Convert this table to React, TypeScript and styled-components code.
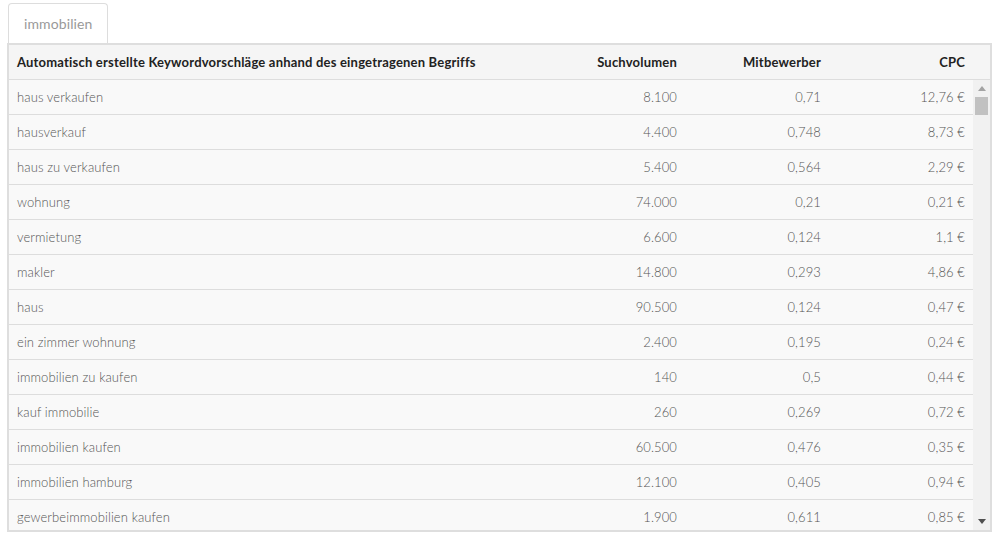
import React from "react";
import styled, { createGlobalStyle } from "styled-components";

const Global = createGlobalStyle`
  html, body { margin: 0; padding: 0; background: #fff; }
  body { font-family: Lato, "Open Sans", sans-serif; }
`;

const Page = styled.div`
  padding: 3px 0 0 7px;
  width: 985px;
`;

const Tabs = styled.div`
  display: flex;
  padding-left: 1px;
`;

const Tab = styled.div`
  height: 40px;
  box-sizing: border-box;
  padding: 0 15px;
  display: flex;
  align-items: center;
  border: 1px solid #dddddd;
  border-bottom: none;
  border-radius: 4px 4px 0 0;
  color: #999;
  font-size: 14px;
  font-weight: 400;
  letter-spacing: 0.1px;
  background: #fff;
`;

const Panel = styled.div`
  border: 2px solid #dedede;
  background: #f5f5f5;
`;

const Row = styled.div<{ $head?: boolean }>`
  display: grid;
  grid-template-columns: 1fr 144px 144px 144px;
  flex: none;
  height: 35px;
  box-sizing: border-box;
  border-bottom: 1px solid #dddddd;
  background: ${(p) => (p.$head ? "#f5f5f5" : "#f9f9f9")};
  color: ${(p) => (p.$head ? "#222" : "#555")};
  font-size: 13px;
  font-weight: ${(p) => (p.$head ? 700 : 300)};
  letter-spacing: ${(p) => (p.$head ? "0.2px" : "0.1px")};
  padding-right: ${(p) => (p.$head ? "17px" : "0")};
`;

const Cell = styled.div<{ $right?: boolean }>`
  display: flex;
  align-items: center;
  justify-content: ${(p) => (p.$right ? "flex-end" : "flex-start")};
  padding: 0 8px;
  white-space: nowrap;
`;

const Body = styled.div`
  display: flex;
  height: 450px;
  overflow: hidden;
`;

const Rows = styled.div`
  flex: 1;
  display: flex;
  flex-direction: column;
`;

const ScrollBar = styled.div`
  width: 17px;
  flex: none;
  background: #f1f1f1;
  display: flex;
  flex-direction: column;
  align-items: center;
`;

const Arrow = styled.div`
  height: 17px;
  width: 17px;
  display: flex;
  align-items: center;
  justify-content: center;
  svg { display: block; }
`;

const Track = styled.div`
  flex: 1;
  width: 100%;
  display: flex;
  flex-direction: column;
  align-items: center;
`;

const Thumb = styled.div`
  width: 13px;
  height: 18px;
  background: #c1c1c1;
`;

type Item = [string, string, string, string];

const data: Item[] = [
  ["haus verkaufen", "8.100", "0,71", "12,76 €"],
  ["hausverkauf", "4.400", "0,748", "8,73 €"],
  ["haus zu verkaufen", "5.400", "0,564", "2,29 €"],
  ["wohnung", "74.000", "0,21", "0,21 €"],
  ["vermietung", "6.600", "0,124", "1,1 €"],
  ["makler", "14.800", "0,293", "4,86 €"],
  ["haus", "90.500", "0,124", "0,47 €"],
  ["ein zimmer wohnung", "2.400", "0,195", "0,24 €"],
  ["immobilien zu kaufen", "140", "0,5", "0,44 €"],
  ["kauf immobilie", "260", "0,269", "0,72 €"],
  ["immobilien kaufen", "60.500", "0,476", "0,35 €"],
  ["immobilien hamburg", "12.100", "0,405", "0,94 €"],
  ["gewerbeimmobilien kaufen", "1.900", "0,611", "0,85 €"],
];

export default function App() {
  return (
    <>
      <Global />
      <Page>
        <Tabs>
          <Tab>immobilien</Tab>
        </Tabs>
        <Panel>
          <Row $head>
            <Cell>Automatisch erstellte Keywordvorschläge anhand des eingetragenen Begriffs</Cell>
            <Cell $right>Suchvolumen</Cell>
            <Cell $right>Mitbewerber</Cell>
            <Cell $right>CPC</Cell>
          </Row>
          <Body>
            <Rows>
              {data.map((r, i) => (
                <Row key={i}>
                  <Cell>{r[0]}</Cell>
                  <Cell $right>{r[1]}</Cell>
                  <Cell $right>{r[2]}</Cell>
                  <Cell $right>{r[3]}</Cell>
                </Row>
              ))}
            </Rows>
            <ScrollBar>
              <Arrow>
                <svg width="8" height="5" viewBox="0 0 8 5">
                  <polygon points="0,5 8,5 4,0" fill="#a3a3a3" />
                </svg>
              </Arrow>
              <Track>
                <Thumb />
              </Track>
              <Arrow>
                <svg width="8" height="5" viewBox="0 0 8 5">
                  <polygon points="0,0 8,0 4,5" fill="#505050" />
                </svg>
              </Arrow>
            </ScrollBar>
          </Body>
        </Panel>
      </Page>
    </>
  );
}
